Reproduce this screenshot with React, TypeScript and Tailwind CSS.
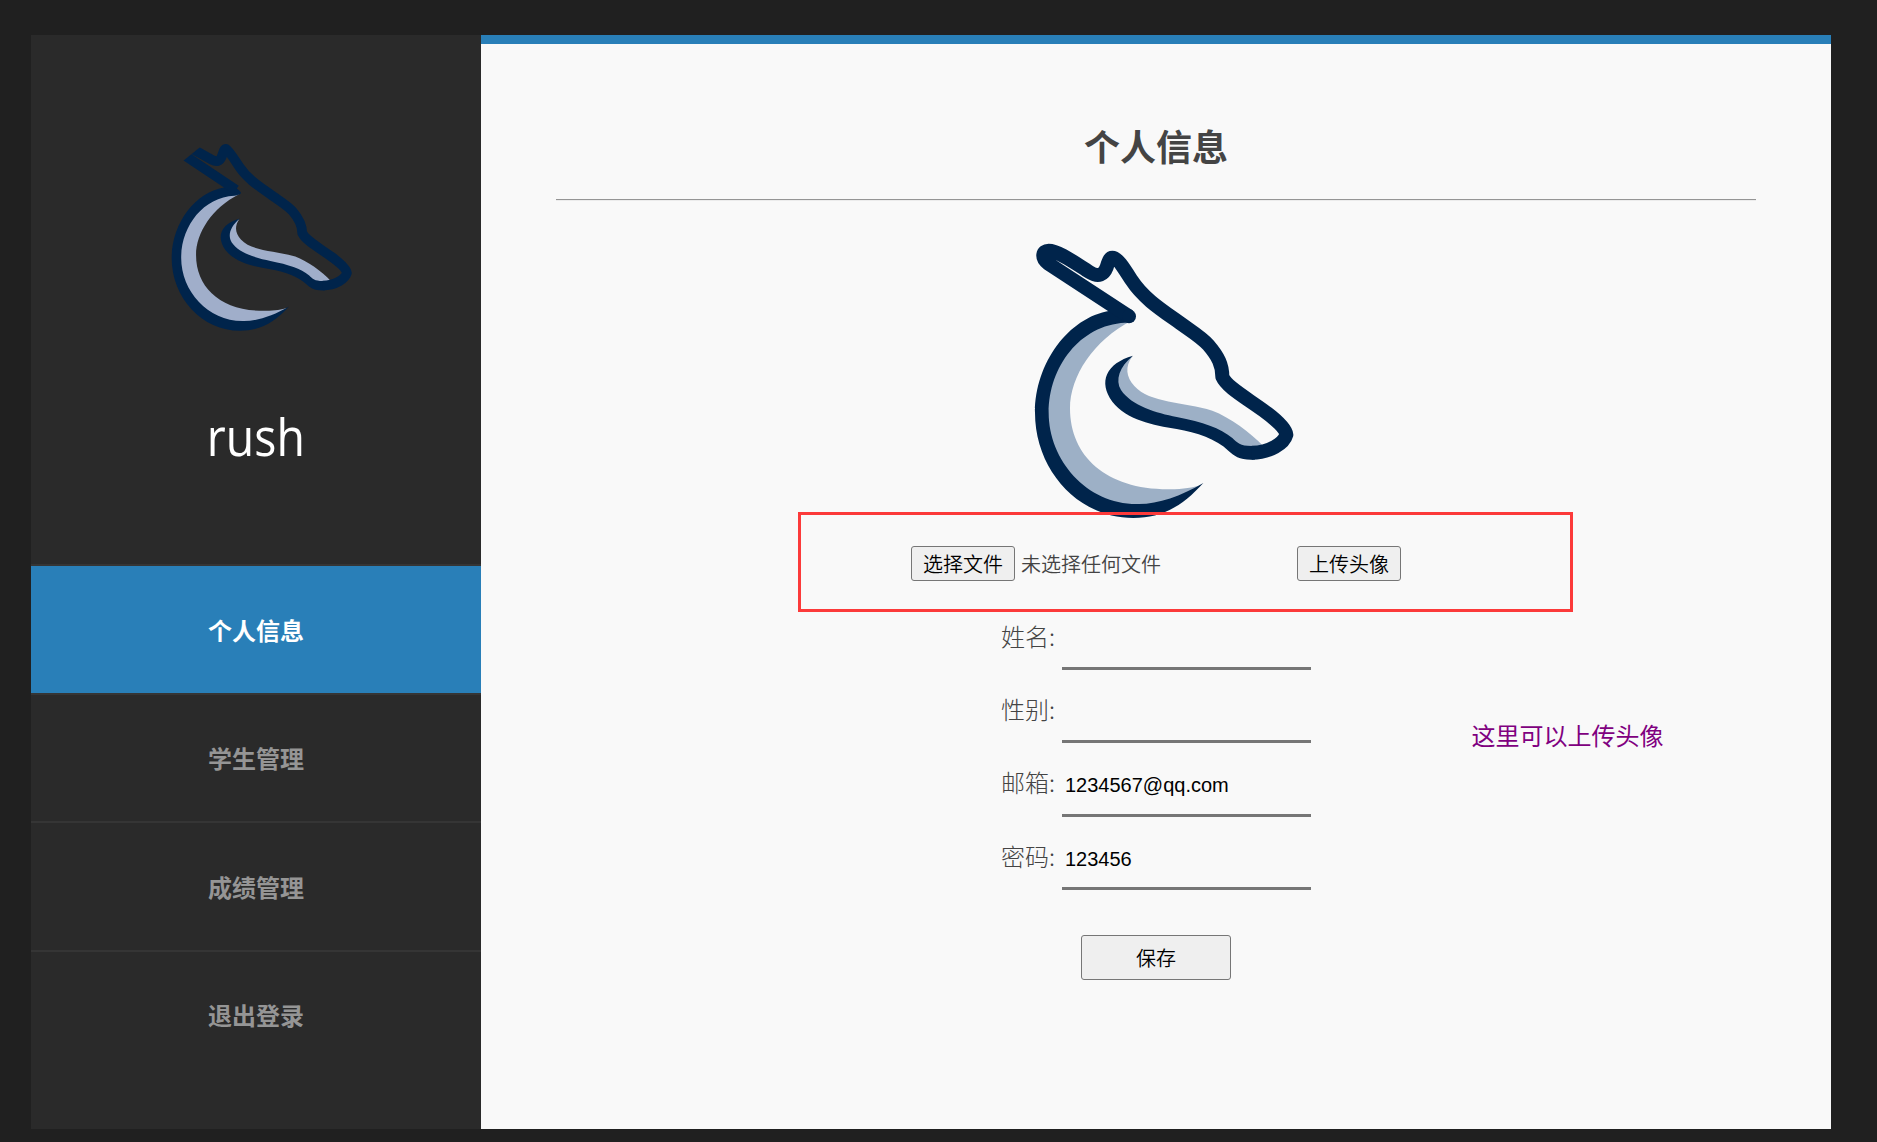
const NAVY = '#00244b';

/** Shared head and neck of the animal mark, in a 900-unit square. */
function Body({ light, ear }: { light: string; ear: string }) {
  return (
    <>
      <path
        fill={light}
        d="M365 272C250 330 180 440 180 535C180 680 290 780 480 778C520 778 550 772 572 766C510 820 450 845 380 838C220 838 96 700 96 548C96 390 200 270 320 262Z"
      />
      <path fill={light} d="M366 380C345 410 348 440 373 468C420 520 520 515 607 542C660 562 720 606 762 650L690 655C600 570 420 580 340 510C290 470 300 400 366 380Z" />
      <path
        fill={NAVY}
        d="M300 242C175 262 75 400 75 548C75 720 205 864 370 864C460 864 520 825 580 759C510 800 440 824 380 822C230 822 116 690 116 548C116 410 210 285 345 278C390 272 372 258 350 242Z"
      />
      <path
        fill={NAVY}
        d="M369 377C328 410 315 450 333 480C365 528 440 549 500 561C580 577 630 594 667 624C682 638 690 648 725 648L735 648L735 688.500L727 689C690 690 672 678 655 662C620 628 560 607 500 597C430 585 350 570 307 515C264 455 288 400 369 377Z"
      />
      <path
        fill="none"
        stroke={NAVY}
        strokeWidth="42"
        strokeLinejoin="round"
        d={ear + 'C322 83 340 112 365 151C400 205 455 240 510 279C545 304 575 322 595 345C625 380 637 405 637 440C650 470 700 498 760 541C800 570 828 597 829 614C822 640 780 668 725 668.500'}
      />
    </>
  );
}

function SidebarLogo() {
  return (
    <svg className="h-[220px] w-[220px]" viewBox="0 0 660 660" aria-hidden="true">
      <defs>
        <clipPath id="ear-edge">
          <path d="M263 13L128 124L-20 246V900H900V13Z" />
        </clipPath>
      </defs>
      <g transform="matrix(.697 0 0 .691 12.7 5)" clipPath="url(#ear-edge)">
        <Body light="#a0aeca" ear="M352 252L115 93M130 56L248 122C270 134 283 127 290 110C297 90 300 75 309 75" />
      </g>
    </svg>
  );
}

function AvatarLogo() {
  return (
    <svg className="h-[300px] w-[300px]" viewBox="0 0 900 900" aria-hidden="true">
      <Body
        light="#9db0c6"
        ear="M357 259L114 100C92 82 98 62 116 62C145 62 195 99 240 127C266 143 282 133 290 112C295 95 299 83 307 83"
      />
      <circle cx="357" cy="259" r="21" fill={NAVY} />
    </svg>
  );
}

const nav = ['个人信息', '学生管理', '成绩管理', '退出登录'];
const fields = [
  ['姓名:', ''],
  ['性别:', ''],
  ['邮箱:', '1234567@qq.com'],
  ['密码:', '123456'],
];

export default function App() {
  return (
    <div className="h-[1142px] w-[1877px] overflow-hidden bg-[#202020] pt-[35px] pl-[31px] font-['Noto_Sans_CJK_SC',sans-serif]">
      <div className="relative flex h-[1094px] w-[1800px]">
        <aside className="flex w-[450px] flex-col bg-[#2a2a2a]">
          <div className="flex h-[529px] flex-col items-center pt-[95px]">
            <div className="flex w-full pl-[119px]">
              <SidebarLogo />
            </div>
            <p className="mt-[54px] scale-x-[.91] font-['Open_Sans',sans-serif] text-[51px] leading-[64px] font-[460] text-white">rush</p>
          </div>
          <nav>
            {nav.map((label, i) => (
              <a
                key={label}
                className={
                  'flex h-[128.67px] items-center justify-center border-t-2 border-[#353535] text-2xl leading-9 font-bold ' +
                  (i === 0 ? 'bg-[#297fb8] pt-px text-white' : 'text-[#959595]')
                }
              >
                {label}
              </a>
            ))}
          </nav>
        </aside>

        <main className="flex w-[1350px] flex-col items-center border-t-[9px] border-[#297fb8] bg-[#f9f9f9] text-[#444]">
          <h1 className="mt-[74px] text-4xl leading-[54px] font-bold">个人信息</h1>
          <hr className="mt-[27px] h-[2px] w-[1200px] border-t border-b border-t-[#959595] border-b-[#ececec]" />
          <div className="mt-[29px] flex w-full pl-[529px]">
            <AvatarLogo />
          </div>
          <div className="mt-4 flex h-[35px] w-[490px] items-center text-xl leading-[30px] font-[350]">
            <button className="h-[35px] w-[104px] rounded-[3px] border border-[#767676] bg-[#efefef] pt-px leading-[30px] font-[350] text-black">选择文件</button>
            <span className="ml-[6px] pt-px">未选择任何文件</span>
            <button className="ml-auto h-[35px] w-[104px] rounded-[3px] border border-[#767676] bg-[#efefef] pt-px leading-[30px] font-[350] text-black">
              上传头像
            </button>
          </div>
          <form className="mt-[15.6px] flex flex-col items-center">
            {fields.map(([label, value]) => (
              <label key={label} className="flex h-[73.4px] w-[310px] items-end justify-between">
                <span className="mb-[16.3px] text-2xl leading-9 font-light">{label}</span>
                <input
                  defaultValue={value}
                  className="h-[63px] w-[249px] border-b-[3px] border-[#767676] bg-transparent pt-[4px] pl-[3px] font-['Liberation_Sans',sans-serif] text-xl text-black outline-none"
                />
              </label>
            ))}
            <button type="button" className="mt-[45px] h-[45px] w-[150px] rounded-[3px] border border-[#767676] bg-[#efefef] pt-px text-xl font-[350] text-black">
              保存
            </button>
          </form>
        </main>

        <div className="absolute top-[477px] left-[767px] h-[100px] w-[775px] border-[3px] border-[#fc3a3a]" />
        <p className="absolute top-[682px] left-[1440.500px] text-2xl leading-9 text-[#800080]">这里可以上传头像</p>
      </div>
    </div>
  );
}
